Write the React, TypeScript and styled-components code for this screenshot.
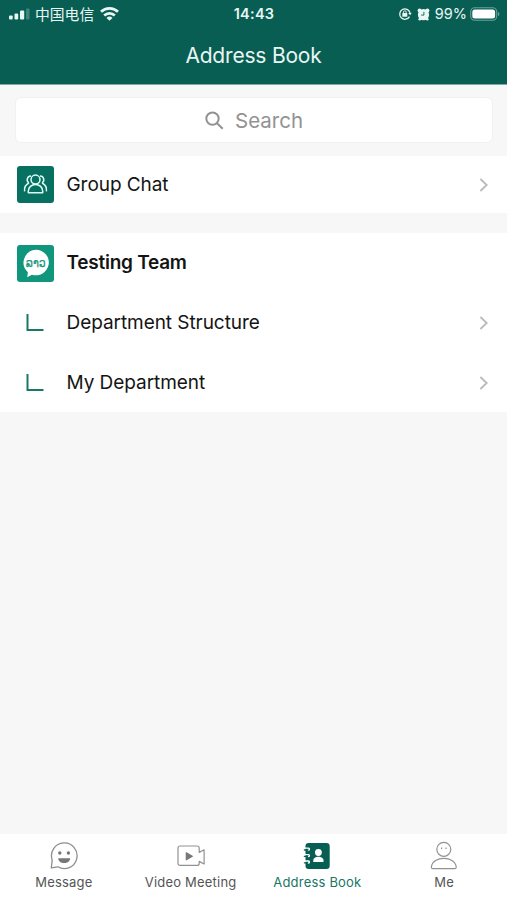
import React from "react";
import styled, { createGlobalStyle } from "styled-components";

const GlobalStyle = createGlobalStyle`
  * { box-sizing: border-box; }
  body { margin: 0; background: #f7f7f7; }
  svg { display: block; flex: none; }
`;

const Screen = styled.div`
  width: 507px;
  height: 900px;
  display: flex;
  flex-direction: column;
  background: #f7f7f7;
  color: #141414;
  font-family: Inter, "Noto Sans CJK SC", sans-serif;
  overflow: hidden;
`;

const Header = styled.header`
  height: 85px;
  flex: none;
  background: #095e54;
  color: #e9f6f3;
  border-bottom: 1px solid #7fa9a3;
`;

const StatusBar = styled.div`
  height: 28px;
  display: grid;
  grid-template-columns: 1fr auto 1fr;
  align-items: center;
  padding: 0 7px 0 9px;
`;

const StatusGroup = styled.div<{ $end?: boolean }>`
  display: flex;
  align-items: center;
  justify-content: ${(p) => (p.$end ? "flex-end" : "flex-start")};
`;

const Carrier = styled.span`
  font: 400 14.8px/20px "Noto Sans CJK SC", sans-serif;
  margin: -1px 6px 0 5px;
`;

const Clock = styled.span`
  font-size: 14.5px;
  font-weight: 600;
  line-height: 18px;
  letter-spacing: 0.25px;
  margin-right: 1px;
`;

const Percent = styled.span`
  font-size: 14.5px;
  line-height: 18px;
  margin: 0 3px 0 5px;
`;

const Title = styled.h1`
  margin: 0;
  text-align: center;
  font-size: 21px;
  font-weight: 400;
  line-height: 56px;
  letter-spacing: -0.2px;
`;

const SearchBox = styled.div`
  height: 46px;
  flex: none;
  margin: 12px 14px 13px 15px;
  display: flex;
  align-items: center;
  justify-content: center;
  gap: 11px;
  background: #fff;
  border: 1px solid #f1f1f1;
  border-radius: 6px;
  color: #929292;
  font-size: 20.5px;
`;

const Section = styled.section<{ $gap?: number }>`
  flex: none;
  margin-bottom: ${(p) => p.$gap ?? 0}px;
  background: #fff;
`;

const Row = styled.div<{ $height: number }>`
  height: ${(p) => p.$height}px;
  display: flex;
  align-items: center;
  padding: 0 18px 0 17px;
`;

const RowIcon = styled.div<{ $shift?: number }>`
  width: 37px;
  flex: none;
  display: flex;
  justify-content: center;
  padding-right: ${(p) => p.$shift ?? 0}px;
  margin-right: 12.5px;
`;

const RowLabel = styled.span<{ $bold?: boolean }>`
  flex: 1;
  font-size: 19px;
  line-height: 26px;
  font-weight: ${(p) => (p.$bold ? 600 : 400)};
  letter-spacing: ${(p) => (p.$bold ? -0.25 : -0.06)}px;
`;

const TabBar = styled.nav`
  height: 66px;
  flex: none;
  margin-top: auto;
  display: grid;
  grid-template-columns: repeat(4, 1fr);
  background: #fff;
`;

const Tab = styled.div<{ $active?: boolean }>`
  display: flex;
  flex-direction: column;
  align-items: center;
  gap: 4px;
  padding-top: 7px;
  padding-left: 1px;
  color: ${(p) => (p.$active ? "#187765" : "#555")};
  font-size: 13px;
  line-height: 16px;
  letter-spacing: 0.2px;
  white-space: nowrap;
`;

const Signal = () => (
  <svg width="21" height="12" viewBox="0 0 21 12" fill="currentColor">
    <rect x="0" y="7.5" width="3.7" height="4" rx="1" />
    <rect x="5.5" y="5.5" width="3.7" height="6" rx="1" />
    <rect x="11" y="2.5" width="4.2" height="9" rx="1" />
    <rect x="17" y="0.5" width="3.5" height="11" rx="1" opacity=".25" />
  </svg>
);

const Wifi = () => (
  <svg width="19" height="14" viewBox="0 0 19 14" fill="none" stroke="currentColor" strokeWidth="2.7">
    <path d="M1 4.8a12.2 12.2 0 0 1 17 0" />
    <path d="M4.2 8.5a7.6 7.6 0 0 1 10.6 0" />
    <path d="M9.5 13.8 6.5 11a4.3 4.3 0 0 1 6 0z" fill="currentColor" stroke="none" />
  </svg>
);

const RotationLock = () => (
  <svg width="14" height="14" viewBox="0 0 14 14" fill="none" stroke="currentColor">
    <path d="M11.5 9.6a5.2 5.2 0 1 1 .5-3.8" strokeWidth="1.3" />
    <path d="m10.2 6 3.5-.2-1.5 2.5z" fill="currentColor" stroke="none" />
    <rect x="4.3" y="6.1" width="5" height="3.7" rx=".6" fill="currentColor" stroke="none" />
    <path d="M5.4 6.4V5.2a1.4 1.4 0 0 1 2.8 0v1.2" />
  </svg>
);

const AlarmSvg = styled.svg`
  margin-left: 5px;
`;

const Alarm = () => (
  <AlarmSvg width="13" height="13" viewBox="0 0 13 13">
    <g fill="currentColor">
      <circle cx="6.5" cy="6.7" r="5.6" />
      <circle cx="2.6" cy="2.5" r="2" />
      <circle cx="10.4" cy="2.5" r="2" />
      <circle cx="2.7" cy="11.2" r="1.3" />
      <circle cx="10.3" cy="11.2" r="1.3" />
    </g>
    <path d="M6.9 3.8v3.3H4.2" fill="none" stroke="#095e54" strokeWidth=".9" />
  </AlarmSvg>
);

const Battery = () => (
  <svg width="30" height="14" viewBox="0 0 30 14">
    <rect x=".7" y=".8" width="26" height="12.4" rx="4" fill="none" stroke="#6ba099" strokeWidth="1.1" />
    <rect x="2.3" y="2.4" width="22.8" height="9.2" rx="2.5" fill="#fff" />
    <path d="M28 4.8c1.9.9 1.9 3.5 0 4.4z" fill="#6ba099" />
  </svg>
);

const SearchIcon = () => (
  <svg width="19" height="19" viewBox="0 0 19 19" fill="none" stroke="#929292" strokeWidth="2">
    <circle cx="7.5" cy="7.6" r="6.2" />
    <path d="m12 12.2 5.7 5.5" />
  </svg>
);

const Chevron = () => (
  <svg width="10" height="14" viewBox="0 0 10 14" fill="none" stroke="#bababa" strokeWidth="1.8">
    <path d="m1.4 1 6.3 6-6.3 6" />
  </svg>
);

const GroupIcon = () => (
  <svg width="37" height="37" viewBox="0 0 37 37" fill="none" stroke="#dcfff8" strokeWidth="1.5">
    <rect width="37" height="37" rx="3" fill="#087060" stroke="none" />
    <circle cx="18.5" cy="13.6" r="4.5" />
    <path d="M11.3 26.8v-1.6a7.2 6.8 0 0 1 14.4 0v1.6z" strokeLinejoin="round" />
    <path d="M14 10a3.7 3.7 0 0 0-2.1 6.8M23 10a3.7 3.7 0 0 1 2.1 6.8M12 17a8 8 0 0 0-4.4 8.4M25 17a8 8 0 0 1 4.4 8.4" />
  </svg>
);

const TeamIcon = () => (
  <svg width="37" height="37" viewBox="0 0 37 37">
    <rect width="37" height="37" rx="3" fill="#10967c" />
    <path d="M19 4.7a13 12.8 0 1 1-4.1 25l-4.7 2.5.7-5A12.9 12.9 0 0 1 19 4.7z" fill="#fff" />
    <text
      x="18.8"
      y="21.5"
      textAnchor="middle"
      textLength="20"
      lengthAdjust="spacingAndGlyphs"
      fontFamily='"DejaVu Sans", sans-serif'
      fontSize="12.5"
      fill="#15957b"
      stroke="#15957b"
      strokeWidth=".25"
    >
      ລາວ
    </text>
  </svg>
);

const Branch = () => (
  <svg width="18" height="18" viewBox="0 0 18 18" fill="none" stroke="#187866" strokeWidth="2">
    <path d="M1.5 0v16H17.5" />
  </svg>
);

const MessageIcon = () => (
  <svg width="28" height="29" viewBox="0 0 28 29" fill="none" stroke="#8e8e8e" strokeWidth="1.3">
    <path d="M1.3 26.8 2.2 19A12.8 12.8 0 1 1 7.8 25.8z" strokeLinejoin="round" />
    <g fill="#777" stroke="none">
      <circle cx="9.8" cy="12" r="1.7" />
      <circle cx="18.4" cy="12" r="1.7" />
      <path d="M8.2 17.2h12c-.6 6.5-11.4 6.5-12 0z" />
    </g>
  </svg>
);

const VideoIcon = () => (
  <svg width="28" height="29" viewBox="0 0 28 29" fill="none" stroke="#929292" strokeWidth="1.2">
    <path
      d="M3 5h17.2a2 2 0 0 1 2 2v4.4l4.9-2.6v14.2l-4.9-2.6v2a2 2 0 0 1-2 2H3a2 2 0 0 1-2-2V7a2 2 0 0 1 2-2z"
      strokeLinejoin="round"
    />
    <path d="m9.3 11.8 6 3.4-6 3.6z" fill="#777" stroke="#777" strokeLinejoin="round" />
  </svg>
);

const BookIcon = () => (
  <svg width="28" height="29" viewBox="0 0 28 29">
    <rect x="2.5" y="2" width="24.2" height="26" rx="3.2" fill="#075e52" />
    <g fill="none" strokeLinecap="round">
      <path
        d="M1 7.2h4.5c1.4.2 1.2 2-.2 2M1 13.6h4.5c1.4.2 1.2 2-.2 2M1 20h4.5c1.4.2 1.2 2-.2 2"
        stroke="#fff"
        strokeWidth="1.3"
      />
      <path d="M1.4 9h2.8M1.4 15.4h2.8M1.4 21.8h2.8" stroke="#075e52" strokeWidth="1.3" />
    </g>
    <circle cx="15.4" cy="11.5" r="3.4" fill="#fff" />
    <path d="M10.3 21v-1.5c0-5 10.2-5 10.2 0V21z" fill="#fff" />
  </svg>
);

const MeIcon = () => (
  <svg width="28" height="29" viewBox="0 0 28 29" fill="none" stroke="#929292" strokeWidth="1.2">
    <circle cx="13.8" cy="8.3" r="7" />
    <path d="M3 27.6c-1.2 0-1.8-.6-1.6-1.8 1.4-11.2 23.4-11.2 24.8 0 .2 1.2-.4 1.8-1.6 1.8z" />
    <path d="M11.6 6.6v1.5M16 6.6v1.5" />
  </svg>
);

export default function App() {
  return (
    <Screen>
      <GlobalStyle />
      <Header>
        <StatusBar>
          <StatusGroup>
            <Signal />
            <Carrier>中国电信</Carrier>
            <Wifi />
          </StatusGroup>
          <Clock>14:43</Clock>
          <StatusGroup $end>
            <RotationLock />
            <Alarm />
            <Percent>99%</Percent>
            <Battery />
          </StatusGroup>
        </StatusBar>
        <Title>Address Book</Title>
      </Header>

      <SearchBox>
        <SearchIcon />
        <span>Search</span>
      </SearchBox>

      <Section $gap={20}>
        <Row $height={57}>
          <RowIcon><GroupIcon /></RowIcon>
          <RowLabel>Group Chat</RowLabel>
          <Chevron />
        </Row>
      </Section>

      <Section>
        <Row $height={60}>
          <RowIcon><TeamIcon /></RowIcon>
          <RowLabel $bold>Testing Team</RowLabel>
        </Row>
        <Row $height={60}>
          <RowIcon $shift={2}><Branch /></RowIcon>
          <RowLabel>Department Structure</RowLabel>
          <Chevron />
        </Row>
        <Row $height={59}>
          <RowIcon $shift={2}><Branch /></RowIcon>
          <RowLabel>My Department</RowLabel>
          <Chevron />
        </Row>
      </Section>

      <TabBar>
        <Tab><MessageIcon />Message</Tab>
        <Tab><VideoIcon />Video Meeting</Tab>
        <Tab $active><BookIcon />Address Book</Tab>
        <Tab><MeIcon />Me</Tab>
      </TabBar>
    </Screen>
  );
}
